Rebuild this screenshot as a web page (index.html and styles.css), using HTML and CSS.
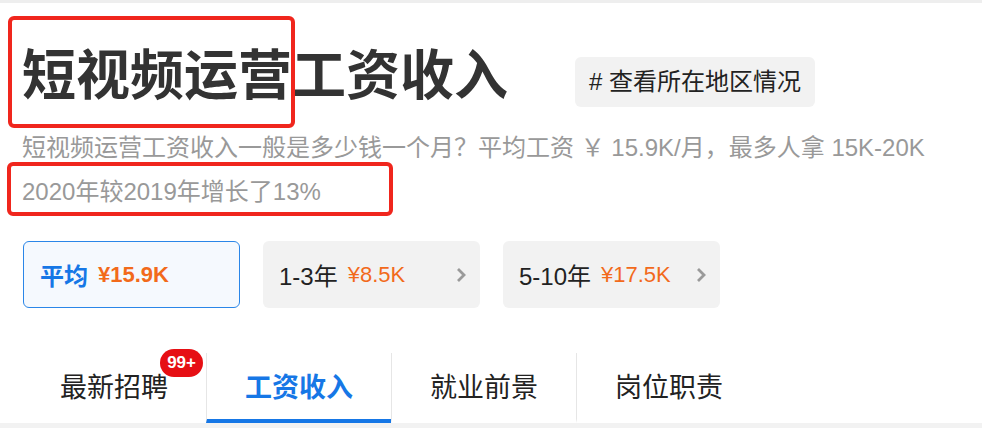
FILE: index.html
```html
<!DOCTYPE html>
<html lang="zh-CN">
<head>
    <meta charset="UTF-8">
    <meta name="viewport" content="width=device-width, initial-scale=1.0">
    <title>短视频运营工资收入</title>
    <link rel="stylesheet" href="styles.css">
</head>
<body>
    <div class="page">
        <div class="title-row">
            <h1>短视频运营工资收入</h1>
            <a class="area-tag" href="#"># 查看所在地区情况</a>
        </div>
        <p class="summary">短视频运营工资收入一般是多少钱一个月？平均工资 ￥ 15.9K/月，最多人拿 15K-20K 2020年较2019年增长了13%</p>

        <div class="salary-cards">
            <div class="salary-card active">
                <span class="card-label">平均</span>
                <span class="card-value">¥15.9K</span>
            </div>
            <div class="salary-card">
                <span class="card-label">1-3年</span>
                <span class="card-value">¥8.5K</span>
                <svg class="chevron" width="12" height="18" viewBox="0 0 12 18"><path d="M3 3l6 6-6 6" fill="none" stroke="#9a9a9a" stroke-width="2.8"/></svg>
            </div>
            <div class="salary-card">
                <span class="card-label">5-10年</span>
                <span class="card-value">¥17.5K</span>
                <svg class="chevron" width="12" height="18" viewBox="0 0 12 18"><path d="M3 3l6 6-6 6" fill="none" stroke="#9a9a9a" stroke-width="2.8"/></svg>
            </div>
        </div>

        <div class="tabs">
            <a class="tab" href="#">最新招聘<span class="badge">99+</span></a>
            <a class="tab active" href="#">工资收入</a>
            <a class="tab" href="#">就业前景</a>
            <a class="tab" href="#">岗位职责</a>
        </div>

        <!-- annotation boxes from the screenshot -->
        <div class="mark mark-title"></div>
        <div class="mark mark-growth"></div>
    </div>
    <div class="section-gap"></div>
</body>
</html>
```

FILE: styles.css
```css
body {
    margin: 0;
    background: #fff;
    font-family: "Liberation Sans", "Noto Sans CJK SC", sans-serif;
    color: #222;
    overflow: hidden;
}

a {
    text-decoration: none;
    color: inherit;
}

.page {
    position: relative;
    border-top: 3px solid #eeeeee;
    padding: 0 22px;
}

.title-row {
    display: flex;
    align-items: flex-start;
    margin-top: 41px;
}

.title-row h1 {
    margin: 0;
    font-size: 54px;
    line-height: 64px;
    font-weight: bold;
    color: #333;
}

.area-tag {
    margin-top: 13px;
    margin-left: 67px;
    height: 50px;
    padding: 0 14px;
    line-height: 50px;
    font-size: 24px;
    color: #222;
    background: #f2f2f2;
    border-radius: 6px;
}

.summary {
    margin: 18px 0 0;
    font-size: 24px;
    line-height: 44px;
    color: #999;
}

.salary-cards {
    display: flex;
    gap: 23px;
    margin-top: 27px;
}

.salary-card {
    display: flex;
    align-items: center;
    gap: 10px;
    box-sizing: border-box;
    width: 217px;
    height: 67px;
    padding: 0 13px 0 16px;
    background: #f2f2f2;
    border-radius: 6px;
}

.salary-card.active {
    background: #f5f9fe;
    border: 1px solid #2a86e8;
    padding-left: 16px;
    margin-left: 1px;
}

.card-label {
    font-size: 24px;
    color: #222;
}

.card-value {
    font-size: 22px;
    color: #f26a1b;
}

.salary-card.active .card-label {
    font-weight: bold;
    color: #1677e6;
}

.salary-card.active .card-value {
    font-weight: bold;
}

.chevron {
    margin-left: auto;
}

.tabs {
    display: flex;
    margin-top: 45px;
}

.tab {
    position: relative;
    padding: 4px 38px 0;
    line-height: 62px;
    font-size: 27px;
    color: #222;
    border-bottom: 4px solid transparent;
}

.tab + .tab {
    border-left: 1px solid #e6e6e6;
}

.tab.active {
    color: #1677e6;
    font-weight: bold;
    border-bottom-color: #1677e6;
}

.badge {
    position: absolute;
    top: -4px;
    right: 3px;
    height: 28px;
    padding: 0 7px;
    line-height: 28px;
    font-size: 17px;
    font-weight: bold;
    color: #fff;
    background: #e60f14;
    border-radius: 14px;
}

.mark {
    position: absolute;
    border: 4px solid #f0261d;
    border-radius: 6px;
}

.mark-title {
    left: 8px;
    top: 13px;
    width: 279px;
    height: 104px;
}

.mark-growth {
    left: 7px;
    top: 159px;
    width: 378px;
    height: 46px;
}

.section-gap {
    height: 20px;
    background: #f2f2f2;
}
```
